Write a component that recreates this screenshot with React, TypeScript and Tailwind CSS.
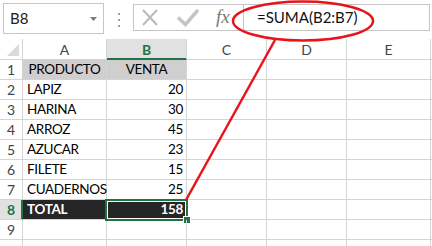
import React from 'react'

// === Data ===
const rows: { n: number; a: string; b: string }[] = [
  { n: 1, a: 'PRODUCTO', b: 'VENTA' },
  { n: 2, a: 'LAPIZ', b: '20' },
  { n: 3, a: 'HARINA', b: '30' },
  { n: 4, a: 'ARROZ', b: '45' },
  { n: 5, a: 'AZUCAR', b: '23' },
  { n: 6, a: 'FILETE', b: '15' },
  { n: 7, a: 'CUADERNOS', b: '25' },
  { n: 8, a: 'TOTAL', b: '158' },
  { n: 9, a: '', b: '' },
  { n: 10, a: '', b: '' },
]

const font = { fontFamily: 'Lato, "Liberation Sans", sans-serif' }
const line = 'border-r border-b border-[#d4d4d4]'
const cellText = 'text-[13.5px] tracking-[-0.35px]'

function FormulaBar() {
  return (
    <div className="flex items-start h-[39px] bg-white">
      {/* name box */}
      <div className="ml-[3px] mt-[3px] w-[101px] h-[31px] border border-[#c6c6c6] flex items-center pl-[6px] pr-[6px]">
        <span className="text-[15px] text-[#222] flex-1 leading-none">B8</span>
        <svg width="7" height="4" viewBox="0 0 7 4">
          <path d="M0 0 L7 0 L3.5 4 Z" fill="#7a7a7a" />
        </svg>
      </div>
      {/* grip dots */}
      <div className="ml-[14px] mt-[13px] flex flex-col gap-[4px]">
        <div className="w-[2px] h-[2px] bg-[#a0a0a0]" />
        <div className="w-[2px] h-[2px] bg-[#a0a0a0]" />
        <div className="w-[2px] h-[2px] bg-[#a0a0a0]" />
      </div>
      {/* formula box */}
      <div className="ml-[13px] mt-[4px] h-[27px] w-[297px] border border-[#c6c6c6] flex">
        <div className="w-[110px] h-full flex items-center border-r border-[#c6c6c6]">
          <svg width="18" height="18" viewBox="0 0 18 18" className="ml-[7px]">
            <path d="M2 1 L16 16 M16 1 L2 16" stroke="#b9b9b9" strokeWidth="2" fill="none" />
          </svg>
          <svg width="22" height="18" viewBox="0 0 22 18" className="ml-[18px]">
            <path d="M1 8.5 L8.5 15.5 L21 1" stroke="#c4c4c4" strokeWidth="3.5" fill="none" />
          </svg>
          <span
            className="ml-[17px] text-[19px] italic text-[#7a7a7a] leading-none -mt-[2px]"
            style={{ fontFamily: '"Liberation Serif", serif' }}
          >
            fx
          </span>
        </div>
        <div className="flex-1 flex items-center pl-[13px]">
          <span className="text-[15px] text-[#111] leading-none">=SUMA(B2:B7)</span>
        </div>
      </div>
    </div>
  )
}

function HeaderRow() {
  return (
    <>
      <div className={`${line} h-[21px] relative bg-white`}>
        <svg width="14" height="14" viewBox="0 0 14 14" className="absolute left-[6px] top-[4px]">
          <path d="M13 1 L13 13 L1 13 Z" fill="#dadada" />
        </svg>
      </div>
      <div className={`${line} h-[21px] flex items-center justify-center text-[14px] text-[#444]`}>A</div>
      <div className="border-r border-b border-r-[#d4d4d4] border-b-[#217346] shadow-[inset_0_-1px_0_#217346] bg-[#e1e1e1] h-[21px] flex items-center justify-center text-[14px] font-bold text-[#217346]">
        B
      </div>
      <div className={`${line} h-[21px] flex items-center justify-center text-[14px] text-[#444]`}>C</div>
      <div className={`${line} h-[21px] flex items-center justify-center text-[14px] text-[#444]`}>D</div>
      <div className={`${line} h-[21px] flex items-center justify-center text-[14px] text-[#444]`}>E</div>
      <div className="border-b border-[#d4d4d4] h-[21px]" />
    </>
  )
}

function DataRow({ n, a, b }: { n: number; a: string; b: string }) {
  const isHead = n === 1
  const isTotal = n === 8
  // row 10 is only partly in view, its number sits below the edge
  const label = n < 10 ? n : ''
  return (
    <>
      <div
        className={
          isTotal
            ? 'border-b border-r border-b-[#d4d4d4] border-r-[#217346] shadow-[inset_-1px_0_0_#217346] bg-[#e1e1e1] h-5 flex items-center justify-center text-[14px] font-bold text-[#217346]'
            : `${line} h-5 flex items-center justify-center text-[14px] text-[#444]`
        }
      >
        {label}
      </div>
      <div
        className={`${line} ${cellText} h-5 flex items-center ${
          isHead ? 'justify-center bg-[#d0cece] text-black' : isTotal ? 'pl-[4px] bg-[#262626] text-white font-bold' : 'pl-[4px] text-black'
        }`}
      >
        {a}
      </div>
      <div
        className={`${line} ${cellText} h-5 flex items-center relative ${
          isHead ? 'justify-center bg-[#d0cece] text-black' : isTotal ? 'justify-end pr-[3px] bg-[#262626] text-white font-bold' : 'justify-end pr-[3px] text-black'
        }`}
      >
        {b}
        {isTotal && (
          <>
            <div className="absolute -left-[2px] -top-[1px] -right-[2px] -bottom-[2px] border-2 border-[#217346] shadow-[inset_0_0_0_1px_#ffffff]" />
            <div className="absolute left-[76px] top-[16px] w-[8px] h-[8px] bg-[#217346] border border-white" />
          </>
        )}
      </div>
      <div className={`${line} h-5`} />
      <div className={`${line} h-5`} />
      <div className={`${line} h-5`} />
      <div className="border-b border-[#d4d4d4] h-5" />
    </>
  )
}

export default function App() {
  return (
    <div className="relative w-[432px] h-[246px] overflow-hidden bg-white" style={font}>
      <FormulaBar />
      <div className="grid grid-cols-[23px_84px_80px_80px_80px_84px_1fr]">
        <HeaderRow />
        {rows.map((r) => (
          <DataRow key={r.n} {...r} />
        ))}
      </div>
      {/* red annotation */}
      <svg className="absolute inset-0 pointer-events-none" width="432" height="246" viewBox="0 0 432 246">
        <ellipse cx="303" cy="21" rx="70" ry="19.5" fill="none" stroke="#e8141b" strokeWidth="2.5" />
        <line x1="186" y1="200" x2="275" y2="40" stroke="#e8141b" strokeWidth="2.5" />
      </svg>
    </div>
  )
}
